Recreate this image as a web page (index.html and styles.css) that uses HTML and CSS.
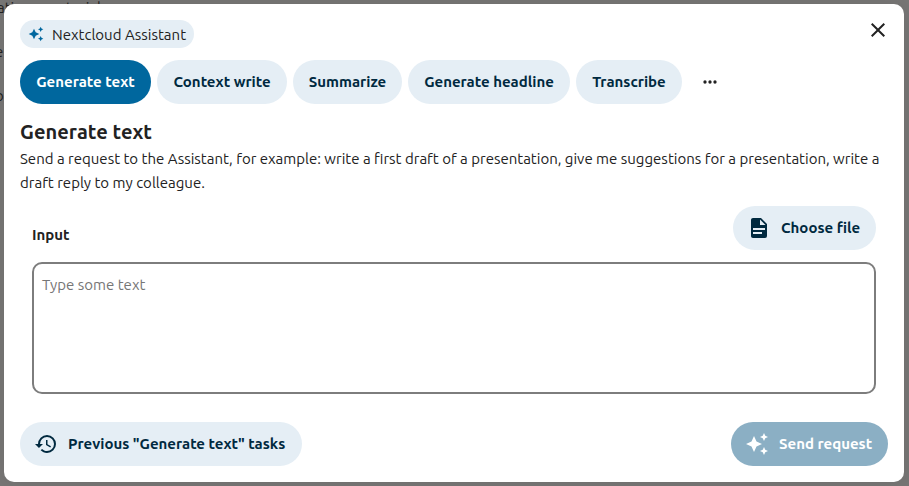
FILE: index.html
```
<!DOCTYPE html>
<html lang="en">
<head>
<meta charset="utf-8">
<title>Nextcloud Assistant</title>
<link rel="stylesheet" href="styles.css">
</head>
<body>
<div class="backdrop" aria-hidden="true">
  <p>ations: material</p>
  <p class="outdent">e</p>
  <p class="outdent">o</p>
</div>
<main class="modal">
  <header class="top">
    <div class="badge">
      <svg class="badge-icon" viewBox="0 0 24 24"><path d="M19,1L17.74,3.75L15,5L17.74,6.26L19,9L20.25,6.26L23,5L20.25,3.75M9,4L6.5,9.5L1,12L6.5,14.5L9,20L11.5,14.5L17,12L11.5,9.5M19,15L17.74,17.74L15,19L17.74,20.25L19,23L20.25,20.25L23,19L20.25,17.74"/></svg>
      <span>Nextcloud Assistant</span>
    </div>
    <button class="close" aria-label="Close"><svg class="icon" viewBox="0 0 24 24"><path d="M19,6.41L17.59,5L12,10.59L6.41,5L5,6.41L10.59,12L5,17.59L6.41,19L12,13.41L17.59,19L19,17.59L13.41,12L19,6.41Z"/></svg></button>
  </header>
  <nav class="tabs">
    <button class="btn tab-generate primary"><span>Generate text</span></button>
    <button class="btn tab-context"><span>Context write</span></button>
    <button class="btn tab-summarize"><span>Summarize</span></button>
    <button class="btn tab-headline"><span>Generate headline</span></button>
    <button class="btn tab-transcribe"><span>Transcribe</span></button>
    <button class="more" aria-label="More"><svg viewBox="0 0 24 24"><path d="M16,12A2,2 0 0,1 18,10A2,2 0 0,1 20,12A2,2 0 0,1 18,14A2,2 0 0,1 16,12M10,12A2,2 0 0,1 12,10A2,2 0 0,1 14,12A2,2 0 0,1 12,14A2,2 0 0,1 10,12M4,12A2,2 0 0,1 6,10A2,2 0 0,1 8,12A2,2 0 0,1 6,14A2,2 0 0,1 4,12Z"/></svg></button>
  </nav>
  <h2>Generate text</h2>
  <p class="description">Send a request to the Assistant, for example: write a first draft of a presentation, give me suggestions for a presentation, write a draft reply to my colleague.</p>
  <section class="field">
    <div class="field-head">
      <label for="input">Input</label>
      <button class="btn choose"><svg class="icon" viewBox="0 0 24 24"><path d="M13,9H18.5L13,3.5V9M6,2H14L20,8V20A2,2 0 0,1 18,22H6C4.89,22 4,21.1 4,20V4C4,2.89 4.89,2 6,2M15,18V16H6V18H15M18,14V12H6V14H18Z"/></svg><span>Choose file</span></button>
    </div>
    <textarea id="input" placeholder="Type some text"></textarea>
  </section>
  <footer class="actions">
    <button class="btn previous"><svg class="icon" viewBox="0 0 24 24"><path d="M13.5,8H12V13L16.28,15.54L17,14.33L13.5,12.25V8M13,3A9,9 0 0,0 4,12H1L4.96,16.03L9,12H6A7,7 0 0,1 13,5A7,7 0 0,1 20,12A7,7 0 0,1 13,19C11.07,19 9.32,18.21 8.06,16.94L6.64,18.36C8.27,20 10.5,21 13,21A9,9 0 0,0 22,12A9,9 0 0,0 13,3"/></svg><span>Previous "Generate text" tasks</span></button>
    <button class="btn send"><svg class="icon" viewBox="0 0 24 24"><path d="M19,1L17.74,3.75L15,5L17.74,6.26L19,9L20.25,6.26L23,5L20.25,3.75M9,4L6.5,9.5L1,12L6.5,14.5L9,20L11.5,14.5L17,12L11.5,9.5M19,15L17.74,17.74L15,19L17.74,20.25L19,23L20.25,20.25L23,19L20.25,17.74"/></svg><span>Send request</span></button>
  </footer>
</main>
</body>
</html>
```
FILE: styles.css
```
* { box-sizing: border-box; }
body {
  margin: 0;
  height: 486px;
  padding: 4px 5px 4px 4px;
  overflow: hidden;
  background: #777675;
  color: #222;
  font: 15px/24px Ubuntu, "Noto Sans", sans-serif;
}
svg { display: block; flex: none; fill: currentColor; }
button { border: 0; padding: 0; font: inherit; color: inherit; background: none; }
.backdrop { position: absolute; top: -4px; left: -3px; white-space: nowrap; }
.backdrop p { margin: 0; height: 44px; }
.backdrop .outdent { margin-left: -2px; }
.modal {
  position: relative;
  display: flex;
  flex-direction: column;
  height: 478px;
  padding: 16px;
  border-radius: 10px;
  background: #fff;
  box-shadow: 0 0 20px rgba(0, 0, 0, .08);
}
.top { display: flex; justify-content: space-between; height: 28px; }
.badge {
  display: flex;
  align-items: center;
  gap: 8px;
  width: 174px;
  height: 28px;
  padding-left: 8px;
  border-radius: 14px;
  background: #e5eef5;
  white-space: nowrap;
}
.badge span { padding-top: 1px; }
.badge-icon { width: 16px; height: 16px; fill: #00679e; }
.close { width: 20px; height: 20px; display: flex; align-items: center; justify-content: center; }
.icon { width: 24px; height: 24px; }
.tabs { display: flex; gap: 6px; margin-top: 12px; }
.btn {
  display: flex;
  align-items: center;
  justify-content: center;
  height: 44px;
  border-radius: 22px;
  background: #e5eef5;
  color: #00293f;
  font-weight: 600;
  white-space: nowrap;
}
.primary { background: #00679e; color: #fff; }
.tab-generate { width: 131px; }
.tab-context { width: 130px; }
.tab-summarize { width: 109px; }
.tab-headline { width: 162px; }
.tab-transcribe { width: 106px; }
.more { width: 44px; display: grid; place-items: center; }
.more svg { width: 20px; height: 20px; }
h2 { margin: 13px 0 0; font-size: 20px; line-height: 30px; font-weight: 600; letter-spacing: .05px; }
.description { margin: 0; }
.field { padding: 0 12px; margin-top: 11px; }
.field-head { display: flex; justify-content: space-between; }
label { margin-top: 17px; font-weight: 600; }
.choose { width: 143px; gap: 10px; }
.choose, .previous, .send { justify-content: flex-start; padding-left: 14px; }
textarea {
  display: block;
  width: 100%;
  height: 132px;
  margin-top: 12px;
  padding: 9px 8px;
  border: 2px solid #7d7d7d;
  border-radius: 10px;
  resize: none;
  outline: none;
  background: #fff;
  font: inherit;
}
textarea::placeholder { color: #767676; opacity: 1; }
.actions { display: flex; justify-content: space-between; margin-top: 28px; }
.previous { width: 282px; gap: 10px; }
.send { width: 157px; gap: 10px; background: #8bafc4; color: #fff; }
```
